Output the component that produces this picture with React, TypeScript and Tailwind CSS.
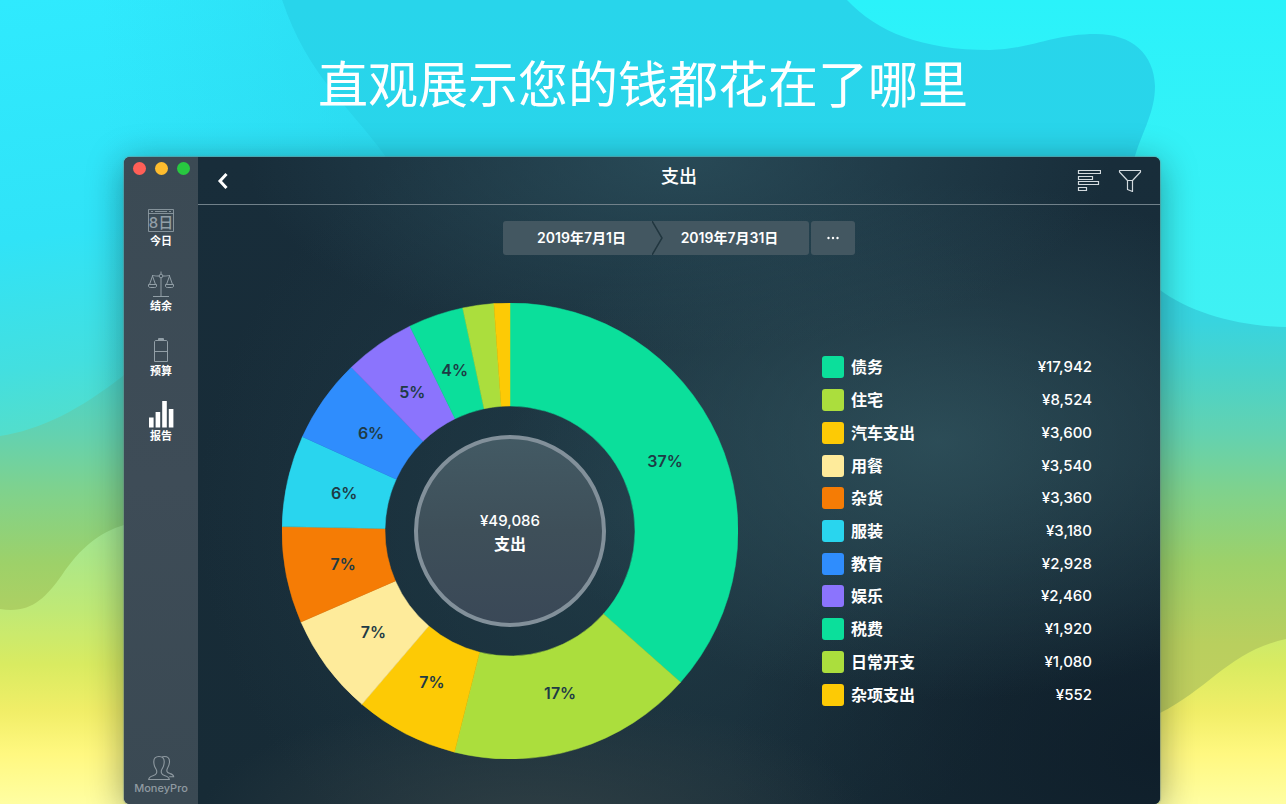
import type { ReactNode } from "react";

type Category = { name: string; value: number; color: string };

const categories: Category[] = [
  { name: "债务", value: 17942, color: "#0bdf9b" },
  { name: "住宅", value: 8524, color: "#abde3d" },
  { name: "汽车支出", value: 3600, color: "#fdca05" },
  { name: "用餐", value: 3540, color: "#feeb9b" },
  { name: "杂货", value: 3360, color: "#f57c05" },
  { name: "服装", value: 3180, color: "#29d5ee" },
  { name: "教育", value: 2928, color: "#2f8dfd" },
  { name: "娱乐", value: 2460, color: "#8b74fd" },
  { name: "税费", value: 1920, color: "#0bdf9b" },
  { name: "日常开支", value: 1080, color: "#abde3d" },
  { name: "杂项支出", value: 552, color: "#fdca05" },
];

const total = categories.reduce((sum, c) => sum + c.value, 0);
const money = (n: number) => "¥" + n.toLocaleString("en-US");

const OUTER = 228;
const INNER = 125;
const LABEL = 170;

function point(radius: number, turn: number): [number, number] {
  const a = turn * Math.PI * 2;
  return [OUTER + radius * Math.sin(a), OUTER - radius * Math.cos(a)];
}

function DonutChart() {
  let start = 0;
  const slices = categories.map((c) => {
    const share = c.value / total;
    const end = start + share;
    const large = share > 0.5 ? 1 : 0;
    const [x1, y1] = point(OUTER, start);
    const [x2, y2] = point(OUTER, end);
    const [x3, y3] = point(INNER, end);
    const [x4, y4] = point(INNER, start);
    const d = `M${x1} ${y1}A${OUTER} ${OUTER} 0 ${large} 1 ${x2} ${y2}L${x3} ${y3}A${INNER} ${INNER} 0 ${large} 0 ${x4} ${y4}Z`;
    const [lx, ly] = point(LABEL, (start + end) / 2);
    start = end;
    return { ...c, share, d, lx, ly };
  });
  return (
    <div className="grid w-[456px] shrink-0 place-items-center">
      <svg viewBox="0 0 456 456" className="col-start-1 row-start-1 w-full" role="img" aria-label="支出">
        <defs>
          <linearGradient id="hub" x1="0" y1="0" x2="0" y2="1">
            <stop offset="0" stopColor="#435a64" />
            <stop offset="0.5" stopColor="#3e4f59" />
            <stop offset="1" stopColor="#3a4857" />
          </linearGradient>
        </defs>
        {slices.map((s) => (
          <path key={s.name} d={s.d} fill={s.color} stroke={s.color} strokeWidth="0.5" />
        ))}
        {slices
          .filter((s) => s.share > 0.03)
          .map((s) => (
            <text
              key={s.name}
              x={s.lx}
              y={s.ly + 6}
              textAnchor="middle"
              className="fill-[#1e3b45] text-[16px] font-semibold"
            >
              {Math.round(s.share * 100)}%
            </text>
          ))}
        <circle cx="228" cy="228" r="94" fill="url(#hub)" stroke="#82909a" strokeWidth="4" />
      </svg>
      <div className="z-10 col-start-1 row-start-1 pt-1 text-center leading-[22px] text-white">
        <p className="text-[15px] font-medium">{money(total)}</p>
        <p className="text-base font-bold">支出</p>
      </div>
    </div>
  );
}

function Legend() {
  return (
    <table className="h-[360px] w-[270px] text-white">
      <tbody>
        {categories.map((c) => (
          <tr key={c.name}>
            <td className="w-[29px] p-0">
              <span className="block size-[22px] rounded-[3px]" style={{ backgroundColor: c.color }} />
            </td>
            <th scope="row" className="p-0 text-left text-base leading-5 font-bold">
              {c.name}
            </th>
            <td className="p-0 text-right text-[15px] leading-5 font-medium">{money(c.value)}</td>
          </tr>
        ))}
      </tbody>
    </table>
  );
}

function CalendarIcon() {
  return (
    <svg width="28" height="26" viewBox="0 0 28 26" fill="none" stroke="currentColor" strokeWidth="1">
      <path d="M1.500 2.500h25v22h-25zM1.500 6.500h25M4 4.500h2M8 4.500h12M22 4.500h2" strokeOpacity="0.85" />
      <text
        x="14"
        y="20.500"
        textAnchor="middle"
        stroke="none"
        fill="currentColor"
        className="text-[15px] font-medium"
      >
        8日
      </text>
    </svg>
  );
}

function ScalesIcon() {
  return (
    <svg width="28" height="28" viewBox="0 0 28 28" fill="none" stroke="currentColor" strokeWidth="1">
      <circle cx="14" cy="6" r="1.8" />
      <path d="M14 1.500v2.500M14 8v18M6 26.500h16M12 6H9.500C8 6 7.500 5.500 5 5.500M16 6h2.500c1.500 0 2-.5 4.500-.5M5.500 6 2.500 14.500M5.500 6l3 8.500M22.500 6l-3 8.500M22.500 6l3 8.500" />
      <path d="M1.500 14.500h8v1.500c0 1-.8 1.500-1.800 1.500H3.300c-1 0-1.800-.5-1.800-1.500zM18.500 14.500h8v1.500c0 1-.8 1.500-1.800 1.500h-4.400c-1 0-1.800-.5-1.800-1.500z" />
    </svg>
  );
}

function BatteryIcon() {
  return (
    <svg width="28" height="26" viewBox="0 0 28 26" fill="none" stroke="currentColor" strokeWidth="1">
      <path d="M11.500 3.500v-2h5v2M9 3.500h10c1 0 1.500.5 1.500 1.500v19.500h-13V5c0-1 .5-1.500 1.500-1.500zM7.500 14.500h13" />
      <path d="M12 2.500h4" />
    </svg>
  );
}

function BarsIcon() {
  return (
    <svg width="28" height="28" viewBox="0 0 28 28" fill="currentColor">
      <path d="M2 17.500h4.600v10H2zM8.600 12h4.600v15.500H8.600zM15.200 1h4.600v26.500h-4.600zM21.800 9h4.600v18.500h-4.600z" />
    </svg>
  );
}

function PeopleIcon() {
  return (
    <svg width="28" height="26" viewBox="0 0 28 26" fill="none" stroke="currentColor" strokeWidth="1.1">
      <path d="M12 1.500c-3.600 0-5.200 2-5.200 5 0 2 .2 3.200.7 4.700.4 1.200.9 2 1.600 3 .6.900.7 2.900.4 4-.4 1.400-1.500 2-3.500 2.500-3 .8-4 1.500-4.300 3.800h20.600c-.3-2.300-1.300-3-4.300-3.800-2-.5-3.100-1.100-3.500-2.500-.3-1.100-.2-3.100.4-4 .7-1 1.200-1.800 1.600-3 .5-1.500.7-2.700.7-4.700 0-3-1.600-5-5.200-5z" />
      <path d="M15 2c.8-.4 1.500-.5 2.500-.5 3.300 0 5 2 5 5 0 3-.8 4.800-2 6.800-.6 1-.8 2.400-.4 3.400.5 1.200 1.600 1.500 3 1.900 2.500.7 3.400 1.300 3.600 3.200h-4.500" />
    </svg>
  );
}

function NavItem({ label, icon, active }: { label: string; icon: ReactNode; active?: boolean }) {
  return (
    <button
      type="button"
      aria-current={active ? "page" : undefined}
      className="flex flex-col items-center text-white"
    >
      <span
        className={
          active ? "flex h-7 items-end text-white" : "flex h-7 items-end text-[#929fa7]"
        }
      >
        {icon}
      </span>
      <span className="text-[11px] leading-4 font-bold">{label}</span>
    </button>
  );
}

function Sidebar() {
  return (
    <aside className="flex w-[74px] shrink-0 flex-col items-center bg-linear-to-b from-[#3b4a54] via-[#3e4c57] to-[#3a4953]">
      <div className="flex gap-[9px] pt-[5px]">
        <button type="button" aria-label="关闭" className="size-[13px] rounded-full bg-[#ff5f57]" />
        <button type="button" aria-label="最小化" className="size-[13px] rounded-full bg-[#febc2e]" />
        <button type="button" aria-label="缩放" className="size-[13px] rounded-full bg-[#28c840]" />
      </div>
      <nav className="flex flex-col gap-[21px] pt-[30px]">
        <NavItem label="今日" icon={<CalendarIcon />} />
        <NavItem label="结余" icon={<ScalesIcon />} />
        <NavItem label="预算" icon={<BatteryIcon />} />
        <NavItem label="报告" icon={<BarsIcon />} active />
      </nav>
      <button
        type="button"
        className="mt-auto flex flex-col items-center pb-[9px] text-[11px] leading-[14px] font-medium text-[#8f9aa1]"
      >
        <PeopleIcon />
        MoneyPro
      </button>
    </aside>
  );
}

function TitleBar() {
  return (
    <header className="grid h-12 grid-cols-[1fr_auto_1fr] items-center border-b border-[#71818a] px-[18px] text-white">
      <button type="button" aria-label="返回" className="justify-self-start">
        <svg width="14" height="18" viewBox="0 0 14 18" fill="none" stroke="currentColor" strokeWidth="3">
          <path d="M10.500 2 4 9l6.500 7" />
        </svg>
      </button>
      <h2 className="pb-2 text-lg leading-6 font-medium">支出</h2>
      <div className="flex gap-[17px] justify-self-end text-[#d3dade]">
        <button type="button" aria-label="排序">
          <svg width="24" height="24" viewBox="0 0 24 24" fill="none" stroke="currentColor" strokeWidth="1.2">
            <path d="M1.500 1.500h22v3h-22zM1.500 7.500h14v3h-14zM1.500 12.500h20v3h-20zM1.500 18.500h8v3h-8z" />
          </svg>
        </button>
        <button type="button" aria-label="筛选">
          <svg width="24" height="24" viewBox="0 0 24 24" fill="none" stroke="currentColor" strokeWidth="1.2" strokeLinejoin="round">
            <path d="M1.500 1.500h21v1.500l-8 8.500v11l-5-2V11.500l-8-8.500zM9.500 11.500h5" />
          </svg>
        </button>
      </div>
    </header>
  );
}

function DateRange() {
  return (
    <div className="flex justify-center gap-0.5 pt-4 text-sm font-semibold text-white">
      <div className="flex h-[34px] rounded-[3px] bg-[#435761]">
        <button type="button" className="w-[149px] pl-2">
          2019年7月1日
        </button>
        <svg width="12" height="34" viewBox="0 0 12 34" fill="none" stroke="#21363f" strokeWidth="1.5" aria-hidden="true">
          <path d="M0 0l10 17L0 34" />
        </svg>
        <button type="button" className="w-[145px] pr-3.5">
          2019年7月31日
        </button>
      </div>
      <button type="button" aria-label="更多" className="grid h-[34px] w-11 place-items-center rounded-[3px] bg-[#435761]">
        <svg width="14" height="4" viewBox="0 0 14 4" fill="currentColor">
          <circle cx="2.500" cy="2" r="1.200" />
          <circle cx="7" cy="2" r="1.200" />
          <circle cx="11.500" cy="2" r="1.200" />
        </svg>
      </button>
    </div>
  );
}

function Backdrop() {
  return (
    <svg
      className="absolute inset-0 size-full"
      viewBox="0 0 1286 804"
      preserveAspectRatio="none"
      aria-hidden="true"
    >
      <defs>
        <linearGradient id="base" gradientUnits="userSpaceOnUse" x1="0" y1="0" x2="0" y2="804">
          <stop offset="0" stopColor="#28d5eb" />
          <stop offset="0.25" stopColor="#29d5ea" />
          <stop offset="0.4" stopColor="#38d4df" />
          <stop offset="0.46" stopColor="#48d3cb" />
          <stop offset="0.54" stopColor="#63d2b0" />
          <stop offset="0.61" stopColor="#7fd28d" />
          <stop offset="0.7" stopColor="#9dd169" />
          <stop offset="0.8" stopColor="#b9cf5e" />
          <stop offset="1" stopColor="#cfcf60" />
        </linearGradient>
        <linearGradient id="leftWave" gradientUnits="userSpaceOnUse" x1="0" y1="0" x2="60" y2="430">
          <stop offset="0" stopColor="#2feafe" />
          <stop offset="0.55" stopColor="#30e3f7" />
          <stop offset="0.85" stopColor="#43dfdf" />
          <stop offset="1" stopColor="#53decb" />
        </linearGradient>
        <linearGradient id="leftShade" gradientUnits="userSpaceOnUse" x1="100" y1="0" x2="400" y2="0">
          <stop offset="0" stopColor="#28d5eb" stopOpacity="0" />
          <stop offset="1" stopColor="#28d5eb" stopOpacity="0.6" />
        </linearGradient>
        <linearGradient id="rightWave" gradientUnits="userSpaceOnUse" x1="0" y1="0" x2="0" y2="327">
          <stop offset="0" stopColor="#2af2fa" />
          <stop offset="1" stopColor="#40f1f3" />
        </linearGradient>
        <linearGradient id="sand" gradientUnits="userSpaceOnUse" x1="0" y1="525" x2="0" y2="804">
          <stop offset="0" stopColor="#a0e693" />
          <stop offset="0.3" stopColor="#bfe976" />
          <stop offset="0.5" stopColor="#d9eb61" />
          <stop offset="0.67" stopColor="#f1ee68" />
          <stop offset="0.82" stopColor="#fff880" />
          <stop offset="1" stopColor="#fffea2" />
        </linearGradient>
      </defs>
      <path fill="url(#base)" d="M0 0h1286v804H0z" />
      <path fill="url(#leftWave)" d="M0 0h282c26 76 62 100 103 156C400 250 200 340 124 375 80 410 40 430 0 436z" />
      <path fill="url(#leftShade)" d="M0 0h282c26 76 62 100 103 156C400 250 200 340 124 375 80 410 40 430 0 436z" />
      <path
        fill="url(#rightWave)"
        d="M847 0c30 32 75 50 143 50 42-1 62-16 106-16 36 0 58 20 59 52 0 26-12 44-20 70-8 50-8 100 25 134 30 22 75 36 126 37V0z"
      />
      <path fill="url(#sand)" d="M0 609c30 5 45-10 62-34 18-27 38-43 62-50h400v279H0z" />
      <path fill="url(#sand)" d="M900 804V740l260-27c50-25 70-62 126-74v165z" />
    </svg>
  );
}

export default function App() {
  return (
    <div className="relative flex min-h-screen flex-col overflow-hidden font-[Inter,'Noto_Sans_CJK_SC',sans-serif]">
      <Backdrop />
      <h1 className="relative pt-[50px] pb-[37px] text-center text-[50px] leading-[70px] font-normal text-white">
        直观展示您的钱都花在了哪里
      </h1>
      <div className="relative flex flex-1 pr-[126px] pl-[124px]">
        <div className="flex flex-1 overflow-hidden rounded-md bg-[#1a2e3a] shadow-[0_6px_36px_rgba(0,20,20,0.4),0_0_1px_1px_rgba(130,160,160,0.5)]">
          <Sidebar />
          <main className="flex-1 bg-[radial-gradient(ellipse_45%_30%_at_50%_0%,rgba(44,80,93,0.8),transparent),radial-gradient(ellipse_35%_20%_at_35%_103%,rgba(52,66,70,0.8),transparent),radial-gradient(ellipse_45%_40%_at_77%_44%,rgba(50,86,96,0.75),transparent),radial-gradient(ellipse_45%_45%_at_100%_92%,rgba(12,26,38,0.75),transparent),radial-gradient(ellipse_45%_65%_at_45%_55%,rgba(38,68,80,0.6),transparent),linear-gradient(to_bottom,#182d3a,#172b36)] pb-[45px]">
            <TitleBar />
            <DateRange />
            <div className="flex items-center justify-between pt-12 pr-[68px] pl-[84px]">
              <DonutChart />
              <Legend />
            </div>
          </main>
        </div>
      </div>
    </div>
  );
}
